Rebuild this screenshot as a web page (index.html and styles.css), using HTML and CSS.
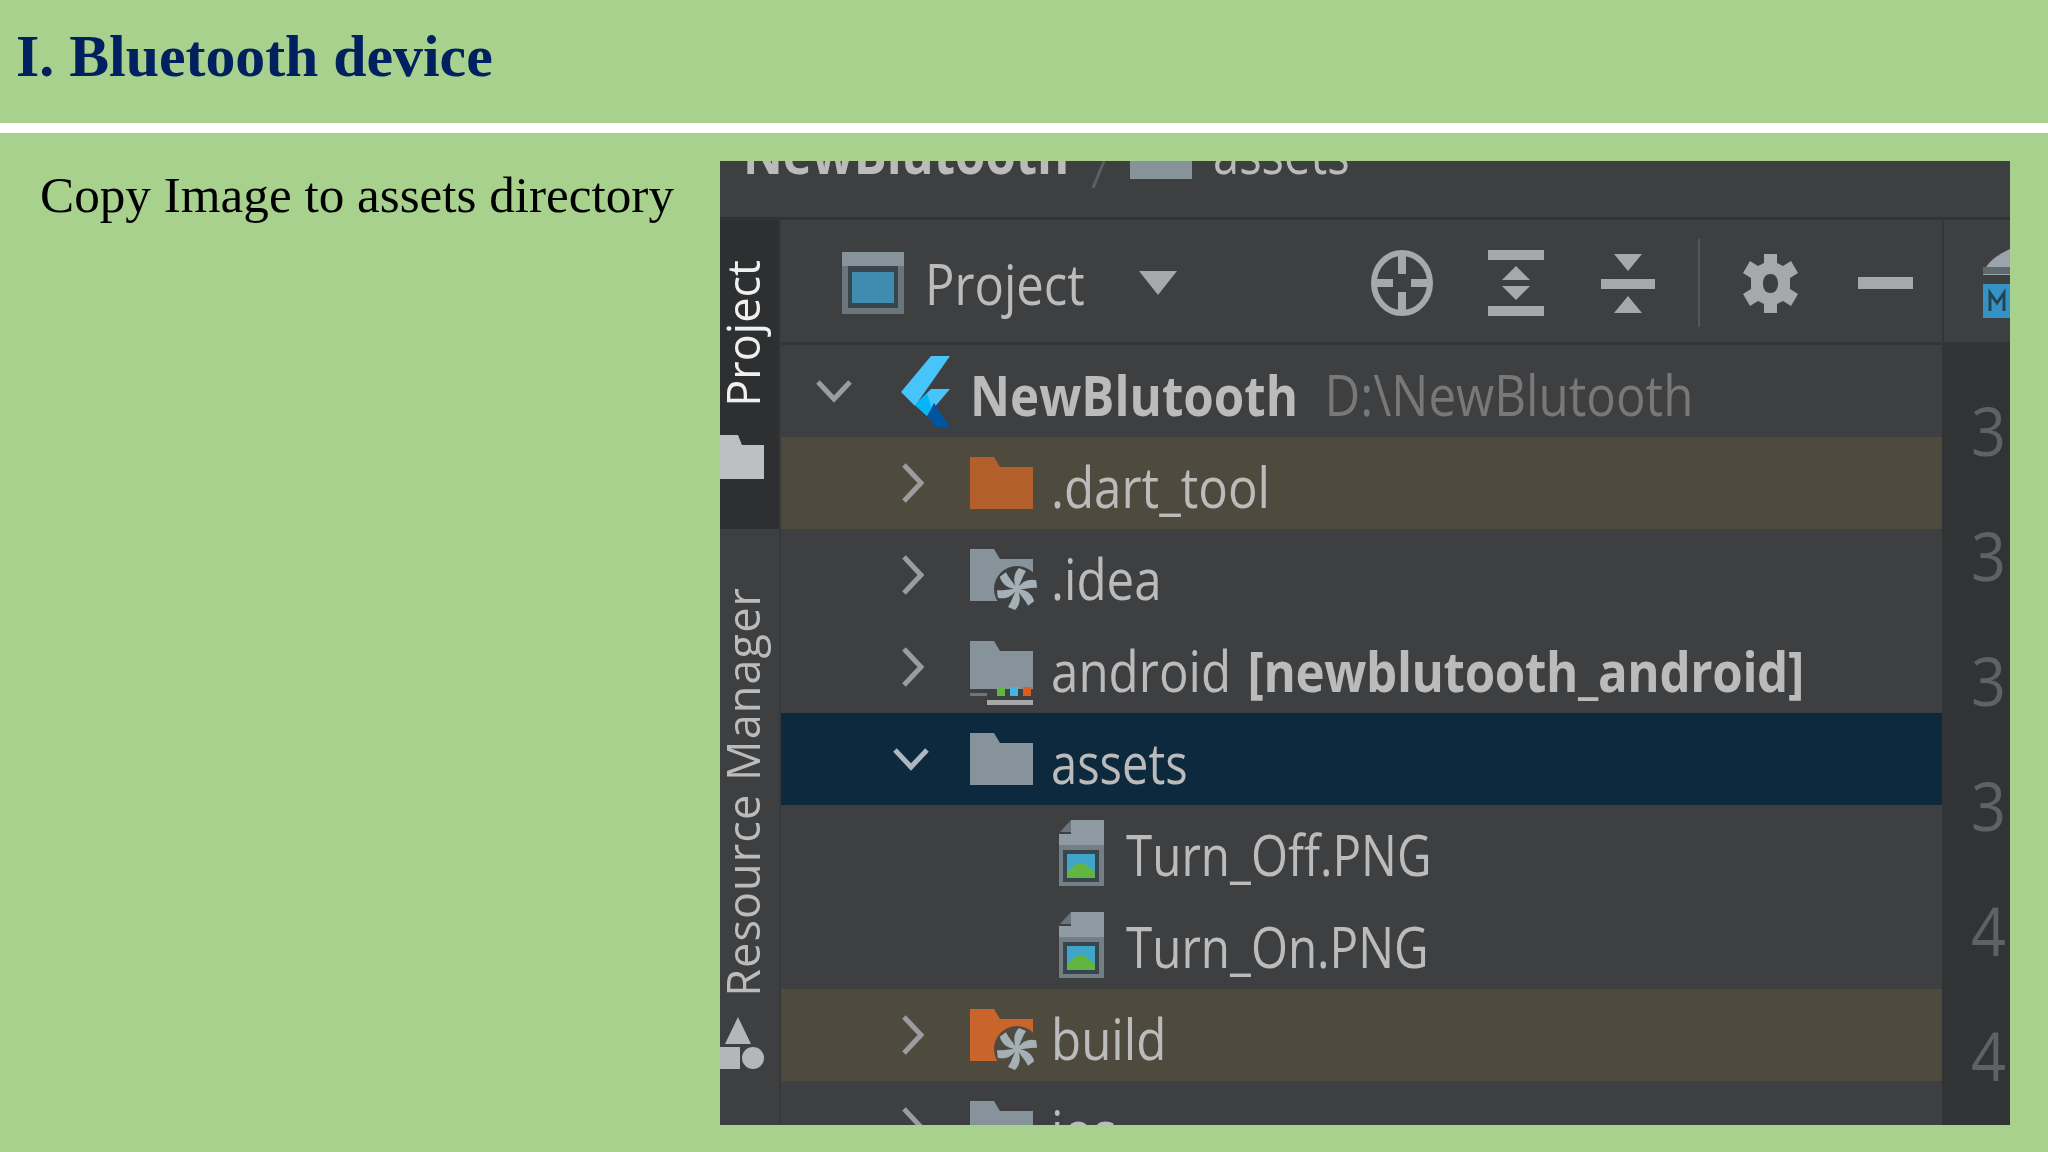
FILE: index.html
```html
<!DOCTYPE html>
<html lang="en">
<head>
<meta charset="utf-8">
<title>I. Bluetooth device</title>
<link rel="stylesheet" href="styles.css">
</head>
<body>
<svg class="defs" aria-hidden="true">
  <symbol id="folder" viewBox="0 0 63 92"><path d="M0 20H24L30 30H63V72H0Z"/></symbol>
  <symbol id="fan" viewBox="0 0 40 44">
    <g fill="#a5afb6">
      <circle cx="20" cy="22" r="4"/>
      <path id="b" d="M20 22C16 15 16 7 22 1L29 4C25 10 24 16 20 22Z"/>
      <use href="#b" transform="rotate(60 20 22)"/><use href="#b" transform="rotate(120 20 22)"/>
      <use href="#b" transform="rotate(180 20 22)"/><use href="#b" transform="rotate(240 20 22)"/>
      <use href="#b" transform="rotate(300 20 22)"/>
    </g>
  </symbol>
  <symbol id="file" viewBox="0 0 46 92">
    <path d="M13 15H46V81H1V29H13Z" fill="#8f9ba3"/>
    <path d="M13 15V27H2Z" fill="#6b747a"/>
    <rect x="1" y="40" width="45" height="41" fill="#747f85"/>
    <rect x="5" y="45" width="36" height="32" fill="#39454c"/>
    <rect x="9" y="49" width="28" height="24" fill="#40a5c8"/>
    <path d="M9 73V67L18 59H27L37 67V73Z" fill="#62b543"/>
  </symbol>
</svg>

<header class="title-bar"><h1>I. Bluetooth device</h1></header>
<div class="rule"></div>

<main class="content">
  <p class="caption">Copy Image to assets directory</p>

  <div class="shot">
    <div class="crumb">
      <div class="crumb-in">
        <span class="lbl crumb-a">NewBlutooth</span>
        <svg class="crumb-slash" width="16" height="27" viewBox="0 0 16 27"><path d="M14 0L3 27" stroke="#5c5f61" stroke-width="3" fill="none"/></svg>
        <svg class="crumb-folder" width="62" height="18" viewBox="0 0 62 18"><path d="M0 0H62V18H0Z" fill="#87939a"/></svg>
        <span class="lbl crumb-b">assets</span>
      </div>
    </div>

    <div class="workspace">
      <aside class="side">
        <div class="side-tab">
          <span class="vtext vtext-on">Project</span>
          <svg class="side-folder" width="44" height="44" viewBox="0 0 44 44"><path d="M0 0H18L22 10H44V44H0Z" fill="#bdbfc0"/></svg>
        </div>
        <div class="side-rest">
          <span class="vtext vtext-wide">Resource Manager</span>
          <svg class="side-res" width="44" height="52" viewBox="0 0 44 52"><path d="M18 0L31 27H5Z M0 30H20V52H0Z" fill="#b4b6b8"/><ellipse cx="33" cy="41" rx="11" ry="11" fill="#b4b6b8"/></svg>
        </div>
      </aside>

      <section class="panel">
        <div class="toolbar">
          <svg class="ic-view" width="62" height="62" viewBox="0 0 62 62"><rect width="62" height="62" fill="#6a767c"/><rect width="62" height="14" fill="#87939a"/><rect x="6" y="14" width="50" height="42" fill="#39454c"/><rect x="10" y="20" width="42" height="31" fill="#3f8cb0"/></svg>
          <span class="lbl tb-label">Project</span>
          <svg class="ic-caret" width="38" height="24" viewBox="0 0 38 24"><path d="M0 0H38L19 24Z" fill="#a6a8aa"/></svg>
          <svg class="ic-target" width="62" height="66" viewBox="0 0 62 66"><ellipse cx="31" cy="33" rx="28" ry="30" fill="none" stroke="#a6a8aa" stroke-width="6"/><path d="M31 2V24M31 42V64M2 33H22M40 33H60" stroke="#a6a8aa" stroke-width="8" fill="none"/></svg>
          <svg class="ic-expand" width="56" height="66" viewBox="0 0 56 66"><path d="M0 0H56V10H0ZM0 56H56V66H0ZM28 16L42 30H14ZM14 36H42L28 50Z" fill="#a6a8aa"/></svg>
          <svg class="ic-collapse" width="54" height="59" viewBox="0 0 54 59"><path d="M0 25H54V35H0ZM13 0H41L27 17ZM27 42L41 59H13Z" fill="#a6a8aa"/></svg>
          <span class="tb-sep"></span>
          <svg class="ic-gear" width="55" height="59" viewBox="0 0 55 59"><path d="M21 0H34V9L40 12L48 7L55 19L47 24V35L55 40L48 52L40 47L34 50V59H21V50L15 47L7 52L0 40L8 35V24L0 19L7 7L15 12L21 9Z M27.500 20C22 20 20 25 20 29.500S22 39 27.500 39S35 34 35 29.500S33 20 27.500 20Z" fill="#a6a8aa" fill-rule="evenodd"/></svg>
          <svg class="ic-min" width="55" height="12" viewBox="0 0 55 12"><rect width="55" height="12" fill="#a6a8aa"/></svg>
        </div>

        <div class="tree">
          <div class="row row-root">
            <svg class="chev-down" width="38" height="24" viewBox="0 0 38 24"><path d="M3 3L19 20L35 3" fill="none" stroke="#9a9c9e" stroke-width="5"/></svg>
            <svg class="logo" width="49" height="71" viewBox="0 0 49 71"><path d="M30 0H49L14 50L0 36Z" fill="#47c5fb"/><path d="M30 33H49L26 60L14 49Z" fill="#47c5fb"/><path d="M14 49L26 37L30 51L26 60Z" fill="#00b5f8"/><path d="M26 60L33 47L49 71H35Z" fill="#00569e"/></svg>
            <span class="lbl"><b>NewBlutooth</b><span class="path">D:\NewBlutooth</span></span>
          </div>

          <div class="row row-dir row-mod">
            <svg class="chev-right" width="23" height="40" viewBox="0 0 23 40"><path d="M3 2L20 20L3 38" fill="none" stroke="#9a9c9e" stroke-width="5"/></svg>
            <svg class="ic-dir dir-orange"><use href="#folder"/></svg>
            <span class="lbl">.dart_tool</span>
          </div>

          <div class="row row-dir">
            <svg class="chev-right" width="23" height="40" viewBox="0 0 23 40"><path d="M3 2L20 20L3 38" fill="none" stroke="#9a9c9e" stroke-width="5"/></svg>
            <svg class="ic-dir dir-grey" viewBox="0 0 63 92"><use href="#folder" width="63" height="92"/><circle cx="47" cy="60" r="23" fill="#3e3f41"/><path d="M0 66H24V72H0Z" fill="#87939a"/><use href="#fan" x="27" y="38" width="40" height="44"/></svg>
            <span class="lbl">.idea</span>
          </div>

          <div class="row row-dir">
            <svg class="chev-right" width="23" height="40" viewBox="0 0 23 40"><path d="M3 2L20 20L3 38" fill="none" stroke="#9a9c9e" stroke-width="5"/></svg>
            <svg class="ic-dir dir-grey" viewBox="0 0 63 92"><use href="#folder" width="63" height="92"/><rect x="0" y="68" width="63" height="20" fill="#3e3f41"/><rect x="0" y="72" width="17" height="3" fill="#6c767c"/><rect x="17" y="79" width="46" height="5" fill="#a5a7a9"/><rect x="27" y="66" width="8" height="9" fill="#62b543"/><rect x="40" y="66" width="8" height="9" fill="#40b6e0"/><rect x="53" y="66" width="8" height="9" fill="#e05a24"/></svg>
            <span class="lbl">android <b class="brk">[newblutooth_android]</b></span>
          </div>

          <div class="row row-open row-sel">
            <svg class="chev-down" width="38" height="24" viewBox="0 0 38 24"><path d="M3 3L19 20L35 3" fill="none" stroke="#aeb7bd" stroke-width="5"/></svg>
            <svg class="ic-dir dir-grey"><use href="#folder"/></svg>
            <span class="lbl">assets</span>
          </div>

          <div class="row row-file">
            <svg class="ic-file"><use href="#file"/></svg>
            <span class="lbl">Turn_Off.PNG</span>
          </div>

          <div class="row row-file">
            <svg class="ic-file"><use href="#file"/></svg>
            <span class="lbl">Turn_On.PNG</span>
          </div>

          <div class="row row-dir row-mod">
            <svg class="chev-right" width="23" height="40" viewBox="0 0 23 40"><path d="M3 2L20 20L3 38" fill="none" stroke="#9a9c9e" stroke-width="5"/></svg>
            <svg class="ic-dir dir-orange2" viewBox="0 0 63 92"><use href="#folder" width="63" height="92"/><circle cx="47" cy="60" r="23" fill="#4e4b3e"/><path d="M0 66H24V72H0Z" fill="#c9642a"/><use href="#fan" x="27" y="38" width="40" height="44"/></svg>
            <span class="lbl">build</span>
          </div>

          <div class="row row-dir">
            <svg class="chev-right" width="23" height="40" viewBox="0 0 23 40"><path d="M3 2L20 20L3 38" fill="none" stroke="#9a9c9e" stroke-width="5"/></svg>
            <svg class="ic-dir dir-grey"><use href="#folder"/></svg>
            <span class="lbl">ios</span>
          </div>
        </div>
      </section>

      <aside class="gutter">
        <div class="gutter-top">
          <svg class="ic-md" width="27" height="69" viewBox="0 0 27 69"><path d="M27 0V26H0C2 14 14 6 27 0Z" fill="#9aa4aa"/><rect y="18" width="27" height="7" fill="#5f686d"/><rect y="35" width="27" height="34" fill="#3592c4"/><path d="M7 62V44L14 54L21 44V62" fill="none" stroke="#26444f" stroke-width="3"/></svg>
        </div>
        <div class="nums">
          <span class="num">3</span><span class="num">3</span><span class="num">3</span>
          <span class="num">3</span><span class="num">4</span><span class="num">4</span>
        </div>
      </aside>
    </div>
  </div>
</main>
</body>
</html>
```

FILE: styles.css
```css
* { box-sizing: border-box; }

html, body { margin: 0; height: 100%; }

body {
  width: 2048px;
  height: 1152px;
  overflow: hidden;
  background: #a9d18e;
  font-family: "Liberation Serif", "Times New Roman", serif;
}

.defs { width: 0; height: 0; display: block; }

.title-bar {
  height: 123px;
  padding: 23px 0 0 16px;
}

h1 {
  margin: 0;
  font-size: 59.8px;
  line-height: 66px;
  font-weight: 700;
  color: #002060;
}

.rule { height: 10px; background: #fff; }

.content {
  display: flex;
  align-items: flex-start;
  padding-top: 28px;
}

.caption {
  width: 720px;
  margin: 0;
  padding: 6px 0 0 40px;
  font-size: 51.2px;
  line-height: 56px;
  color: #000;
  white-space: nowrap;
}

.shot {
  width: 1290px;
  height: 964px;
  background: #3e3f41;
  overflow: hidden;
  display: flex;
  flex-direction: column;
  font-family: "Open Sans", "Noto Sans", sans-serif;
  filter: blur(0.7px);
}

.lbl {
  display: inline-block;
  font-size: 56px;
  line-height: 76px;
  color: #bbbbbb;
  white-space: nowrap;
  transform: scaleX(0.84);
  transform-origin: left center;
}

.crumb {
  height: 59px;
  flex: none;
  border-bottom: 3px solid #323335;
  overflow: hidden;
}

.crumb-in {
  display: flex;
  align-items: flex-start;
  height: 56px;
  padding-left: 23px;
}

.crumb-a {
  width: 347px;
  margin-top: -47px;
  font-weight: 700;
  flex: none;
  transform: scaleX(0.875);
}

.crumb-b { margin-top: -47px; margin-left: 21px; flex: none; }

.crumb-folder { margin-left: 24px; flex: none; }
.crumb-slash { flex: none; }

.workspace { display: flex; flex: 1; min-height: 0; }

.side {
  width: 61px;
  flex: none;
  display: flex;
  flex-direction: column;
  border-right: 2px solid #36383a;
}

.side-tab {
  height: 309px;
  flex: none;
  background: #2d2f30;
  display: flex;
  flex-direction: column;
  padding-top: 40px;
}

.side-rest {
  flex: 1;
  display: flex;
  flex-direction: column;
  padding-top: 58px;
}

.vtext {
  writing-mode: vertical-rl;
  transform: rotate(180deg);
  font-size: 45px;
  line-height: 44px;
  color: #bbbbbb;
  white-space: nowrap;
  align-self: flex-start;
  margin-left: 1px;
  flex: none;
}

.vtext-on { color: #f0f0f0; }
.vtext-wide { letter-spacing: 1.1px; }

.side-folder { margin-top: 28px; flex: none; }
.side-res { margin-top: 20px; flex: none; }

.panel {
  width: 1161px;
  flex: none;
  display: flex;
  flex-direction: column;
  overflow: hidden;
}

.toolbar {
  height: 125px;
  flex: none;
  display: flex;
  align-items: center;
  border-bottom: 3px solid #333537;
  padding: 4px 0 0 61px;
}

.ic-view { flex: none; }
.tb-label { width: 212px; margin-left: 21px; flex: none; transform: scaleX(0.875); }
.ic-caret { flex: none; margin-left: 2px; }
.ic-target { margin-left: 194px; flex: none; }
.ic-expand { margin-left: 55px; flex: none; }
.ic-collapse { margin-left: 57px; flex: none; }
.tb-sep { width: 2px; height: 88px; margin-left: 43px; background: #53565a; flex: none; }
.ic-gear { margin-left: 43px; flex: none; }
.ic-min { margin-left: 60px; flex: none; }

.tree { flex: 1; min-height: 0; overflow: hidden; }

.row {
  height: 92px;
  display: flex;
  align-items: center;
  white-space: nowrap;
}

.row .lbl { padding-top: 6px; }
.row-dir .lbl, .row-root .lbl { transform: scaleX(0.88); }
.row-file .lbl { transform: scaleX(0.85); }

.brk { margin-left: 4px; letter-spacing: -0.4px; }

.row-mod { background: #4e4b3e; }
.row-sel { background: #0d293e; }

.row-root { padding-left: 34px; }
.row-dir { padding-left: 120px; }
.row-open { padding-left: 111px; }
.row-file { padding-left: 277px; }

.chev-down, .chev-right, .logo { flex: none; }

.logo { margin-left: 48px; margin-right: 20px; }
.row-root b { font-weight: 700; }
.path { margin-left: 30px; color: #787878; }

.row-dir .chev-right { margin-right: 46px; }
.row-open .chev-down { margin-right: 40px; }

.ic-dir {
  width: 63px;
  height: 92px;
  flex: none;
  margin-right: 18px;
  overflow: visible;
}

.dir-grey { fill: #87939a; }
.dir-orange { fill: #b35f2b; }
.dir-orange2 { fill: #c9642a; }

.ic-file {
  width: 46px;
  height: 92px;
  flex: none;
  margin-right: 22px;
}

.gutter {
  flex: 1;
  min-width: 0;
  background: #313335;
  display: flex;
  flex-direction: column;
  overflow: hidden;
}

.gutter-top {
  height: 125px;
  flex: none;
  padding-top: 4px;
  background: #3e3f41;
  border-bottom: 3px solid #333537;
  border-left: 2px solid #333537;
  display: flex;
  justify-content: flex-end;
  align-items: center;
}

.nums {
  display: flex;
  flex-direction: column;
  padding: 22px 0 0 29px;
}

.num {
  height: 125px;
  font-size: 68px;
  line-height: 125px;
  color: #5e6265;
  transform: scaleX(0.9);
  transform-origin: left center;
}
```
